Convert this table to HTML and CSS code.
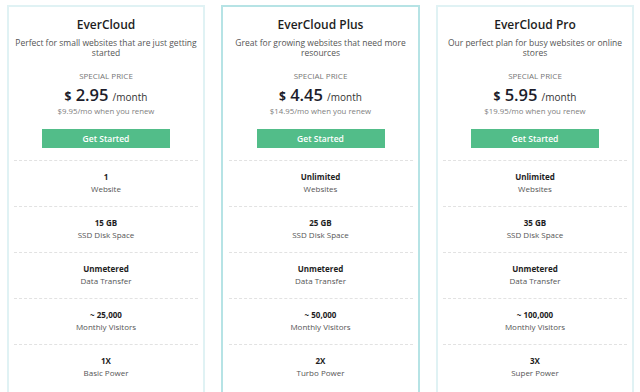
FILE: index.html
```html
<!DOCTYPE html>
<html lang="en">
<head>
<meta charset="utf-8">
<title>EverCloud Plans</title>
<link rel="stylesheet" href="styles.css">
</head>
<body>
<main class="plans">
  <section class="card">
    <h2 class="title">EverCloud</h2>
    <p class="desc">Perfect for small websites that are just getting started</p>
    <p class="special">SPECIAL PRICE</p>
    <p class="price"><span class="cur">$</span> <span class="amt">2.95</span> <span class="per">/month</span></p>
    <p class="renew">$9.95/mo when you renew</p>
    <a class="btn" href="#">Get Started</a>
    <ul class="features">
      <li><b>1</b><span>Website</span></li>
      <li><b>15 GB</b><span>SSD Disk Space</span></li>
      <li><b>Unmetered</b><span>Data Transfer</span></li>
      <li><b>~ 25,000</b><span>Monthly Visitors</span></li>
      <li><b>1X</b><span>Basic Power</span></li>
    </ul>
  </section>
  <section class="card featured">
    <h2 class="title">EverCloud Plus</h2>
    <p class="desc">Great for growing websites that need more resources</p>
    <p class="special">SPECIAL PRICE</p>
    <p class="price"><span class="cur">$</span> <span class="amt">4.45</span> <span class="per">/month</span></p>
    <p class="renew">$14.95/mo when you renew</p>
    <a class="btn" href="#">Get Started</a>
    <ul class="features">
      <li><b>Unlimited</b><span>Websites</span></li>
      <li><b>25 GB</b><span>SSD Disk Space</span></li>
      <li><b>Unmetered</b><span>Data Transfer</span></li>
      <li><b>~ 50,000</b><span>Monthly Visitors</span></li>
      <li><b>2X</b><span>Turbo Power</span></li>
    </ul>
  </section>
  <section class="card">
    <h2 class="title">EverCloud Pro</h2>
    <p class="desc">Our perfect plan for busy websites or online stores</p>
    <p class="special">SPECIAL PRICE</p>
    <p class="price"><span class="cur">$</span> <span class="amt">5.95</span> <span class="per">/month</span></p>
    <p class="renew">$19.95/mo when you renew</p>
    <a class="btn" href="#">Get Started</a>
    <ul class="features">
      <li><b>Unlimited</b><span>Websites</span></li>
      <li><b>35 GB</b><span>SSD Disk Space</span></li>
      <li><b>Unmetered</b><span>Data Transfer</span></li>
      <li><b>~ 100,000</b><span>Monthly Visitors</span></li>
      <li><b>3X</b><span>Super Power</span></li>
    </ul>
  </section>
</main>
</body>
</html>
```

FILE: styles.css
```css
* { box-sizing: border-box; }
html, body { margin: 0; background: #fff; }
body {
  font-family: "Open Sans", "Noto Sans", sans-serif;
  color: #333;
  padding: 5px 6px 0 7px;
  overflow: hidden;
  height: 392px;
}
.plans {
  display: grid;
  grid-template-columns: 198px 199px 198px;
  column-gap: 16px;
  align-items: start;
}
.card {
  border: 2px solid #e0f2f4;
  background: #fff;
  display: flex;
  flex-direction: column;
  align-items: center;
  text-align: center;
  padding: 10px 5px 40px;
}
.card.featured { border-color: #b6e3e5; }
.title {
  margin: 0;
  font-size: 12px;
  line-height: 16px;
  font-weight: 600;
  color: #1d1d1d;
}
.desc {
  margin: 5px -2px 0;
  padding: 0;
  font-size: 8.5px;
  line-height: 10px;
  color: #555;
}
.special {
  margin: 13px 0 0;
  font-size: 8px;
  line-height: 10px;
  color: #777;
}
.price {
  margin: 4px 0 0;
  height: 20px;
  line-height: 20px;
  color: #1d1d2b;
  white-space: nowrap;
}
.cur { font-size: 12px; font-weight: 700; }
.amt { font-size: 16.5px; font-weight: 600; }
.per { font-size: 10px; color: #333; }
.renew {
  margin: 1px 0 0;
  font-size: 7.8px;
  line-height: 10px;
  color: #808080;
}
.btn {
  margin-top: 13px;
  width: 128px;
  height: 19px;
  background: #52bd89;
  color: #fff;
  font-size: 8.5px;
  font-weight: 600;
  line-height: 19px;
  text-decoration: none;
}
.features {
  list-style: none;
  margin: 12px 0 0;
  padding: 0;
  width: 184px;
}
.features li {
  border-top: 1px dashed #e2e2e2;
  padding: 10px 0 11px;
  display: flex;
  flex-direction: column;
  font-size: 8px;
  line-height: 12px;
}
.features b { font-weight: 700; color: #1d1d1d; }
.features span { color: #555; }
```
